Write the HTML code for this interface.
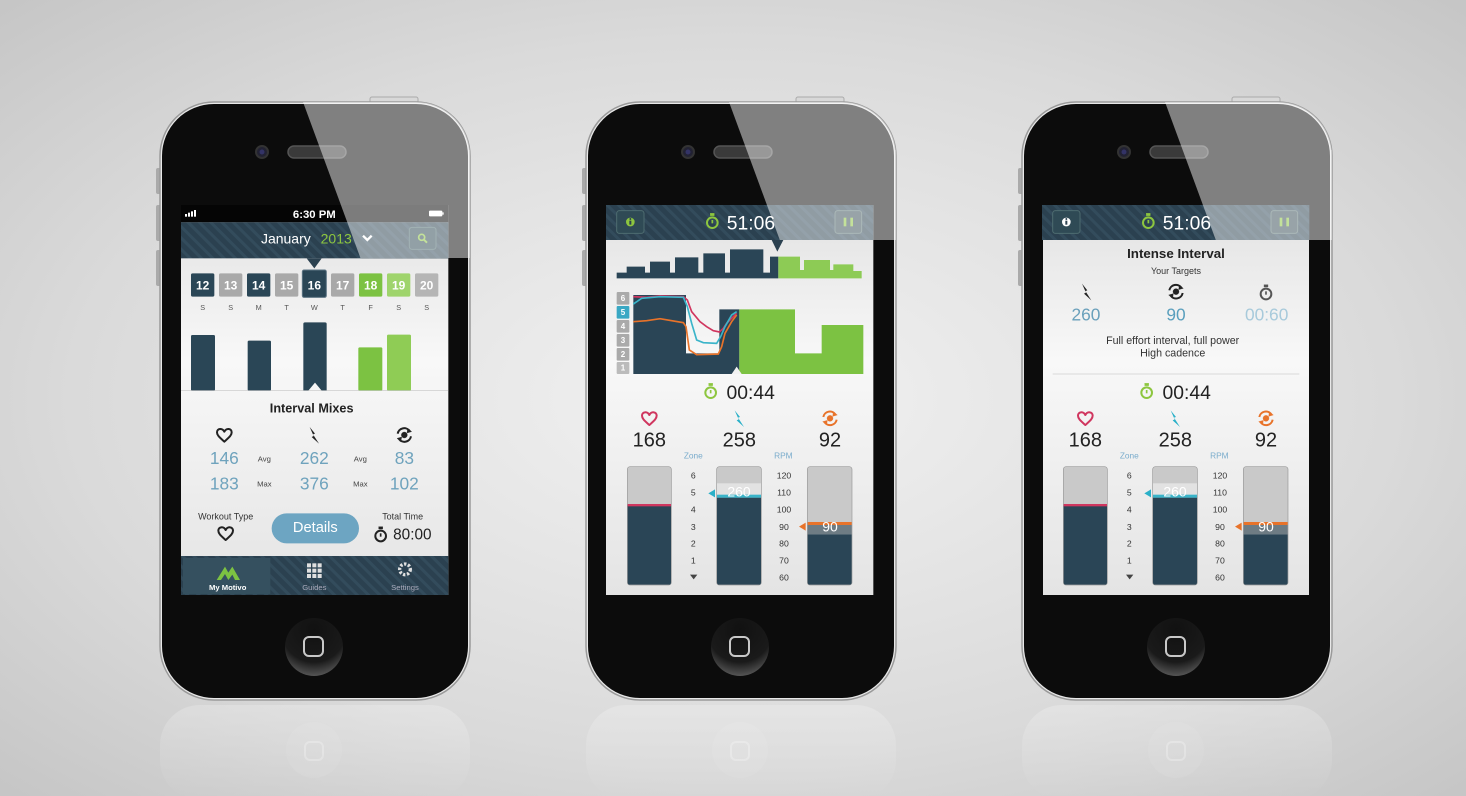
<!DOCTYPE html>
<html><head><meta charset="utf-8"><style>
html,body{margin:0;padding:0;width:1466px;height:796px;overflow:hidden;}
svg{display:block;font-family:"Liberation Sans",sans-serif;}
</style></head><body>
<svg width="1466" height="796" viewBox="0 0 1466 796" xmlns="http://www.w3.org/2000/svg">
<defs>
<radialGradient id="bg" cx="0.5" cy="0.5" r="0.75">
<stop offset="0" stop-color="#f2f2f2"/><stop offset="0.6" stop-color="#dadada"/><stop offset="1" stop-color="#c2c2c2"/>
</radialGradient>
<linearGradient id="scr" x1="0" y1="0" x2="0" y2="1">
<stop offset="0" stop-color="#e2e2e2"/><stop offset="0.4" stop-color="#f8f8f8"/><stop offset="1" stop-color="#e4e4e4"/>
</linearGradient>
<linearGradient id="refl" x1="0" y1="0" x2="0" y2="1">
<stop offset="0" stop-color="#fff" stop-opacity="0.22"/><stop offset="1" stop-color="#fff" stop-opacity="0"/>
</linearGradient>
<radialGradient id="home" cx="0.5" cy="0.2" r="0.8">
<stop offset="0" stop-color="#111"/><stop offset="0.7" stop-color="#1a1a1a"/><stop offset="1" stop-color="#555"/>
</radialGradient>
<pattern id="stripe2" width="24" height="24" patternUnits="userSpaceOnUse" patternTransform="rotate(-45)">
<rect width="24" height="24" fill="#2b4150"/><rect width="9" height="24" fill="#334c5c"/>
</pattern>
<g id="heart"><path d="M0,20 C-12,9 -22,2 -22,-8 C-22,-20 -6,-22 0,-10 C6,-22 22,-20 22,-8 C22,2 12,9 0,20Z" fill="none" stroke-width="6" stroke-linejoin="round"/></g>
<g id="bolt"><path d="M-14,-24 L2,-4 L-4,-2 L14,26 L-8,6 L-2,3 Z"/></g>
<g id="cad"><circle r="9"/><path d="M-20,-4 A20,20 0 0 1 16,-12" fill="none" stroke-width="6"/><path d="M20,4 A20,20 0 0 1 -16,12" fill="none" stroke-width="6"/><path d="M10,-20 L22,-10 L8,-6Z"/><path d="M-10,20 L-22,10 L-8,6Z"/></g>
<g id="watch"><circle r="16" fill="none" stroke-width="6"/><rect x="-6" y="-28" width="12" height="7"/><path d="M0,-8 L0,2" stroke-width="5"/></g>
</defs>

<rect width="1466" height="796" fill="url(#bg)"/>

<g id="phones">
<g id="phone">
 <rect x="160" y="705" width="310" height="95" rx="40" fill="url(#refl)"/>
 <circle cx="314" cy="750" r="28" fill="#fff" opacity="0.07"/>
 <rect x="305" y="742" width="18" height="18" rx="5" fill="none" stroke="#fff" stroke-opacity="0.25" stroke-width="2"/>
 <rect x="370" y="97" width="48" height="6" rx="2" fill="#d8d8d8" stroke="#aaa" stroke-width="1"/>
 <rect x="156" y="168" width="5" height="26" rx="2" fill="#aaa"/>
 <rect x="156" y="205" width="5" height="36" rx="2" fill="#aaa"/>
 <rect x="156" y="250" width="5" height="36" rx="2" fill="#aaa"/>
 <rect x="160" y="102" width="310" height="598" rx="54" fill="#e8e8e8" stroke="#9a9a9a" stroke-width="1.5"/>
 <rect x="162" y="104" width="306" height="594" rx="52" fill="#0c0c0c"/>
 <circle cx="262" cy="152" r="6" fill="#223" stroke="#333" stroke-width="2"/>
 <circle cx="262" cy="152" r="2.5" fill="#336"/>
 <rect x="288" y="146" width="58" height="12" rx="6" fill="#3a3a3a" stroke="#555" stroke-width="1.5"/>
 <circle cx="314" cy="647" r="29" fill="url(#home)"/>
 <rect x="304" y="637" width="19" height="19" rx="5" fill="none" stroke="#c8c8c8" stroke-width="2"/>
</g>
<use href="#phone" transform="translate(426,0)"/>
<use href="#phone" transform="translate(862,0)"/>
</g>

<!-- SCREEN 1 -->
<g transform="translate(175,200) scale(0.33333)">
 <rect x="18" y="15" width="802" height="1170" fill="url(#scr)"/>
 <rect x="18" y="15" width="802" height="52" fill="#050505"/>
 <rect x="30" y="42" width="6" height="8" fill="#fff"/><rect x="39" y="38" width="6" height="12" fill="#fff"/><rect x="48" y="34" width="6" height="16" fill="#fff"/><rect x="57" y="30" width="6" height="20" fill="#fff"/>
 <text x="418" y="54" font-size="34" font-weight="bold" fill="#fff" text-anchor="middle">6:30 PM</text>
 <rect x="762" y="32" width="40" height="17" rx="3" fill="#fff"/><rect x="802" y="37" width="4" height="7" fill="#fff"/>
 <rect x="18" y="67" width="802" height="108" fill="url(#stripe2)"/>
 <text x="258" y="130" font-size="42" fill="#fff">January</text>
 <text x="437" y="130" font-size="42" fill="#8dc63f">2013</text>
 <path d="M564,107 L577,120 L590,107" fill="none" stroke="#fff" stroke-width="7"/>
 <rect x="703" y="82" width="80" height="66" rx="8" fill="#2f4a55" stroke="#4e6c70" stroke-width="3"/>
 <circle cx="740" cy="112" r="9" fill="none" stroke="#8dc63f" stroke-width="5"/><path d="M747,119 L756,128" stroke="#8dc63f" stroke-width="6"/>
 <path d="M395,175 L440,175 L418,205Z" fill="#2b4150"/>
 <g font-size="36" font-weight="bold" fill="#fff" text-anchor="middle">
  <rect x="48" y="220" width="70" height="70" rx="5" fill="#2a4656"/><text x="83" y="268">12</text>
  <rect x="132" y="220" width="70" height="70" rx="5" fill="#a9a9a9"/><text x="167" y="268">13</text>
  <rect x="216" y="220" width="70" height="70" rx="5" fill="#2a4656"/><text x="251" y="268">14</text>
  <rect x="300" y="220" width="70" height="70" rx="5" fill="#a9a9a9"/><text x="335" y="268">15</text>
  <rect x="382" y="210" width="72" height="82" rx="5" fill="#2a4656" stroke="#5d7584" stroke-width="3"/><text x="418" y="268">16</text>
  <rect x="468" y="220" width="70" height="70" rx="5" fill="#a9a9a9"/><text x="503" y="268">17</text>
  <rect x="552" y="220" width="70" height="70" rx="5" fill="#7cc242"/><text x="587" y="268">18</text>
  <rect x="636" y="220" width="70" height="70" rx="5" fill="#9fd46c"/><text x="671" y="268">19</text>
  <rect x="720" y="220" width="70" height="70" rx="5" fill="#b5b5b5"/><text x="755" y="268">20</text>
 </g>
 <g font-size="22" fill="#555" text-anchor="middle">
  <text x="83" y="330">S</text><text x="167" y="330">S</text><text x="251" y="330">M</text><text x="335" y="330">T</text><text x="418" y="330">W</text><text x="503" y="330">T</text><text x="587" y="330">F</text><text x="671" y="330">S</text><text x="755" y="330">S</text>
 </g>
 <rect x="48" y="405" width="72" height="167" rx="4" fill="#2a4656"/>
 <rect x="218" y="422" width="70" height="150" rx="4" fill="#2a4656"/>
 <path d="M385,372 Q385,367 390,367 L450,367 Q455,367 455,372 L455,572 L440,572 L420,548 L400,572 L385,572Z" fill="#2a4656"/>
 <rect x="550" y="442" width="72" height="130" rx="4" fill="#7cc242"/>
 <rect x="636" y="404" width="72" height="168" rx="4" fill="#8fcc55"/>
 <rect x="18" y="571" width="802" height="2" fill="#c8c8c8"/>
 <text x="410" y="638" font-size="38" font-weight="bold" fill="#222" text-anchor="middle">Interval Mixes</text>
 <use href="#heart" x="148" y="705" stroke="#222"/>
 <use href="#bolt" x="418" y="705" fill="#222"/>
 <use href="#cad" x="688" y="705" fill="#222" stroke="#222"/>
 <g font-size="52" fill="#6fa3bd" text-anchor="middle">
  <text x="148" y="792">146</text><text x="418" y="792">262</text><text x="688" y="792">83</text>
  <text x="148" y="868">183</text><text x="418" y="868">376</text><text x="688" y="868">102</text>
 </g>
 <g font-size="23" fill="#444" text-anchor="middle">
  <text x="268" y="784">Avg</text><text x="556" y="784">Avg</text><text x="268" y="860">Max</text><text x="556" y="860">Max</text>
 </g>
 <text x="152" y="958" font-size="27" fill="#333" text-anchor="middle">Workout Type</text>
 <use href="#heart" x="152" y="1000" stroke="#222"/>
 <rect x="290" y="940" width="262" height="90" rx="45" fill="#6da5c2"/>
 <text x="421" y="996" font-size="44" fill="#fff" text-anchor="middle">Details</text>
 <text x="683" y="958" font-size="27" fill="#333" text-anchor="middle">Total Time</text>
 <use href="#watch" x="617" y="1008" fill="#222" stroke="#222"/>
 <text x="712" y="1018" font-size="46" fill="#222" text-anchor="middle">80:00</text>
 <rect x="18" y="1068" width="802" height="117" fill="url(#stripe2)"/>
 <rect x="24" y="1074" width="262" height="108" fill="#35505f"/>
 <path d="M125,1140 L150,1100 L160,1118 L172,1100 L195,1140 L180,1140 L172,1124 L160,1140 L150,1122 L138,1140Z" fill="#7cc242"/>
 <g fill="#e0e0e0">
  <rect x="396" y="1090" width="12" height="12"/><rect x="412" y="1090" width="12" height="12"/><rect x="428" y="1090" width="12" height="12"/>
  <rect x="396" y="1106" width="12" height="12"/><rect x="412" y="1106" width="12" height="12"/><rect x="428" y="1106" width="12" height="12"/>
  <rect x="396" y="1122" width="12" height="12"/><rect x="412" y="1122" width="12" height="12"/><rect x="428" y="1122" width="12" height="12"/>
 </g>
 <circle cx="690" cy="1108" r="16" fill="none" stroke="#e0e0e0" stroke-width="10" stroke-dasharray="7 5"/>
 <circle cx="690" cy="1108" r="5" fill="#2b4150"/>
 <text x="158" y="1170" font-size="23" font-weight="bold" fill="#fff" text-anchor="middle">My Motivo</text>
 <text x="418" y="1170" font-size="23" fill="#aab" text-anchor="middle">Guides</text>
 <text x="690" y="1170" font-size="23" fill="#aab" text-anchor="middle">Settings</text>
</g>

<defs>
<g id="bottom">
 <use href="#watch" x="332" y="578" fill="#8dc63f" stroke="#8dc63f"/>
 <text x="452" y="597" font-size="58" fill="#222" text-anchor="middle">00:44</text>
 <use href="#heart" x="148" y="655" stroke="#d0365f"/>
 <use href="#bolt" x="418" y="655" fill="#2ab0c8"/>
 <use href="#cad" x="690" y="655" fill="#e8732a" stroke="#e8732a"/>
 <g font-size="60" fill="#222" text-anchor="middle">
  <text x="148" y="740">168</text><text x="418" y="740">258</text><text x="690" y="740">92</text>
 </g>
 <text x="280" y="776" font-size="25" fill="#7aaccc" text-anchor="middle">Zone</text>
 <text x="550" y="776" font-size="25" fill="#7aaccc" text-anchor="middle">RPM</text>
 <rect x="82" y="800" width="132" height="355" rx="8" fill="#c9c9c9" stroke="#999" stroke-width="2"/>
 <path d="M83,917 L213,917 L213,1147 Q213,1154 206,1154 L90,1154 Q83,1154 83,1147Z" fill="#2a4556"/>
 <rect x="83" y="912" width="130" height="7" fill="#d0365f"/>
 <rect x="350" y="800" width="134" height="355" rx="8" fill="#c9c9c9" stroke="#999" stroke-width="2"/>
 <rect x="351" y="850" width="132" height="35" fill="#e2e2e2"/>
 <path d="M351,893 L483,893 L483,1147 Q483,1154 476,1154 L358,1154 Q351,1154 351,1147Z" fill="#2a4556"/>
 <rect x="351" y="884" width="132" height="9" fill="#3ab4c9"/>
 <text x="417" y="890" font-size="42" fill="#fff" text-anchor="middle">260</text>
 <rect x="622" y="800" width="134" height="355" rx="8" fill="#c9c9c9" stroke="#999" stroke-width="2"/>
 <rect x="623" y="975" width="132" height="28" fill="#6e7c84"/>
 <path d="M623,1003 L755,1003 L755,1147 Q755,1154 748,1154 L630,1154 Q623,1154 623,1147Z" fill="#2a4556"/>
 <rect x="623" y="966" width="132" height="9" fill="#e8732a"/>
 <text x="690" y="994" font-size="42" fill="#fff" text-anchor="middle">90</text>
 <g font-size="26" fill="#333" text-anchor="middle">
  <text x="280" y="836">6</text><text x="280" y="887">5</text><text x="280" y="938">4</text><text x="280" y="990">3</text><text x="280" y="1040">2</text><text x="280" y="1090">1</text>
  <text x="552" y="836">120</text><text x="552" y="887">110</text><text x="552" y="938">100</text><text x="552" y="990">90</text><text x="552" y="1040">80</text><text x="552" y="1090">70</text><text x="552" y="1141">60</text>
 </g>
 <path d="M270,1124 L292,1124 L281,1138Z" fill="#444"/>
 <path d="M325,880 L345,868 L345,892Z" fill="#2ab0c8"/>
 <path d="M597,980 L617,968 L617,992Z" fill="#e8732a"/>
</g>
<g id="hdr">
 <rect x="18" y="15" width="802" height="105" fill="url(#stripe2)"/>
 <rect x="50" y="32" width="82" height="68" rx="8" fill="#2f4a55" stroke="#4e6c70" stroke-width="3"/>
 <use href="#watch" x="337" y="68" fill="#8dc63f" stroke="#8dc63f"/>
 <text x="453" y="88" font-size="58" fill="#fff" text-anchor="middle">51:06</text>
 <rect x="705" y="32" width="80" height="68" rx="8" fill="#3a5058" stroke="#5e7878" stroke-width="3"/>
 <rect x="731" y="53" width="8" height="26" fill="#8dc63f"/><rect x="751" y="53" width="8" height="26" fill="#8dc63f"/>
</g>
</defs>

<!-- SCREEN 2 -->
<g transform="translate(600,200) scale(0.33333)">
 <rect x="18" y="15" width="802" height="1170" fill="url(#scr)"/>
 <use href="#hdr"/>
 <circle cx="91" cy="66" r="13" fill="#8dc63f"/><rect x="88" y="62" width="6" height="12" fill="#2b4150"/><circle cx="91" cy="57" r="3" fill="#2b4150"/>
 <path d="M515,120 L550,120 L532,155Z" fill="#2b4150"/>
 <path d="M50,235 V218 H80 V200 H135 V218 H150 V185 H210 V218 H225 V172 H295 V218 H310 V160 H375 V218 H390 V148 H490 V218 H510 V170 H535 V235 Z" fill="#2a4556"/>
 <path d="M535,235 V170 H600 V210 H612 V180 H690 V210 H700 V193 H760 V213 H785 V235 Z" fill="#8dcb55"/>
 <g font-size="24" font-weight="bold" fill="#fff" text-anchor="middle">
  <rect x="50" y="276" width="38" height="38" rx="3" fill="#aaa"/><text x="69" y="303">6</text>
  <rect x="50" y="318" width="38" height="38" rx="3" fill="#3aa8c4"/><text x="69" y="345">5</text>
  <rect x="50" y="360" width="38" height="38" rx="3" fill="#aaa"/><text x="69" y="387">4</text>
  <rect x="50" y="402" width="38" height="38" rx="3" fill="#aaa"/><text x="69" y="429">3</text>
  <rect x="50" y="444" width="38" height="38" rx="3" fill="#aaa"/><text x="69" y="471">2</text>
  <rect x="50" y="486" width="38" height="36" rx="3" fill="#bbb"/><text x="69" y="512">1</text>
 </g>
 <path d="M100,522 V285 H258 V460 H358 V328 H418 V522 Z" fill="#2a4556"/>
 <path d="M418,522 V328 H585 V460 H665 V375 H790 V522 Z" fill="#7cc242"/>
 <path d="M395,522 L410,500 L425,522Z" fill="#f2f2f2"/>
 <polyline points="100,290 140,292 180,288 250,290 262,300 275,335 300,365 320,380 340,392 358,396 370,385 380,370 395,355 410,340" fill="none" stroke="#d0365f" stroke-width="5"/>
 <polyline points="100,312 125,295 180,290 250,292 262,320 275,370 290,420 310,428 350,430 362,410 375,380 395,345 410,335" fill="none" stroke="#3ab4c9" stroke-width="5"/>
 <polyline points="100,365 140,362 180,356 250,368 258,380 268,450 290,464 355,462 365,440 375,400 395,365 410,345" fill="none" stroke="#e8732a" stroke-width="5"/>
 <use href="#bottom"/>
</g>

<!-- SCREEN 3 -->
<g transform="translate(1036,200) scale(0.33333)">
 <rect x="21" y="15" width="798" height="1170" fill="url(#scr)"/>
 <use href="#hdr"/>
 <circle cx="91" cy="66" r="13" fill="#fff"/><rect x="88" y="62" width="6" height="12" fill="#2b4150"/><circle cx="91" cy="57" r="3" fill="#2b4150"/>
 <text x="420" y="174" font-size="40" font-weight="bold" fill="#222" text-anchor="middle">Intense Interval</text>
 <text x="420" y="222" font-size="27" fill="#333" text-anchor="middle">Your Targets</text>
 <use href="#bolt" x="152" y="275" fill="#222"/>
 <use href="#cad" x="420" y="275" fill="#222" stroke="#222"/>
 <use href="#watch" x="690" y="282" fill="#555" stroke="#555"/>
 <g font-size="52" text-anchor="middle">
  <text x="150" y="362" fill="#6aa0bb">260</text><text x="420" y="362" fill="#5a9fbd">90</text><text x="692" y="362" fill="#a8cadb">00:60</text>
 </g>
 <text x="410" y="432" font-size="32" fill="#333" text-anchor="middle">Full effort interval, full power</text>
 <text x="410" y="470" font-size="32" fill="#333" text-anchor="middle">High cadence</text>
 <rect x="50" y="521" width="740" height="2" fill="#ccc"/>
 <use href="#bottom"/>
</g>

<!-- glare -->
<defs>
<clipPath id="pc1"><rect x="160" y="102" width="310" height="156" rx="54"/><rect x="160" y="150" width="310" height="108"/></clipPath>
<clipPath id="pc2"><rect x="586" y="102" width="310" height="138" rx="54"/><rect x="586" y="150" width="310" height="90"/></clipPath>
<clipPath id="pc3"><rect x="1022" y="102" width="310" height="138" rx="54"/><rect x="1022" y="150" width="310" height="90"/></clipPath>
</defs>
<g clip-path="url(#pc1)">
 <path d="M303,102 L470,102 L470,265 L363,265Z" fill="#fff" opacity="0.48"/>
</g>
<g clip-path="url(#pc2)">
 <path d="M729,102 L896,102 L896,265 L789,265Z" fill="#fff" opacity="0.48"/>
</g>
<g clip-path="url(#pc3)">
 <path d="M1165,102 L1332,102 L1332,265 L1225,265Z" fill="#fff" opacity="0.48"/>
</g>
</svg>
</body></html>
